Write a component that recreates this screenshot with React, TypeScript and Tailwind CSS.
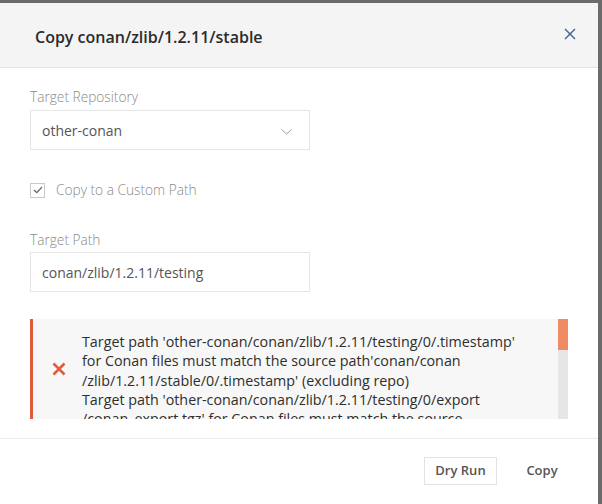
import React from 'react';

const errorLines = [
  "Target path 'other-conan/conan/zlib/1.2.11/testing/0/.timestamp'",
  "for Conan files must match the source path'conan/conan",
  "/zlib/1.2.11/stable/0/.timestamp' (excluding repo)",
  "Target path 'other-conan/conan/zlib/1.2.11/testing/0/export",
  "/conan_export.tgz' for Conan files must match the source",
  "path'conan/conan/zlib/1.2.11/stable/0/export/conan_export.tgz'",
];

export default function App() {
  return (
    <div
      className="h-[504px] w-[602px] overflow-hidden bg-[#6b6b6b] pt-[3px]"
      style={{ fontFamily: '"Open Sans", "Liberation Sans", sans-serif' }}
    >
      <div className="flex h-[501px] w-[598px] flex-col bg-white">
        {/* Header */}
        <div className="flex h-[65px] shrink-0 items-center justify-between border-b border-[#e3e3e3] bg-[#f4f4f4] pl-[35px] pr-[22px]">
          <h1 className="mt-[3px] text-[16px] font-semibold text-[#2b2b2b]">Copy conan/zlib/1.2.11/stable</h1>
          <button className="mb-[3px] text-[#3f5f8f]">
            <svg width="12" height="12" viewBox="0 0 12 12" fill="none" stroke="currentColor" strokeWidth="1.4">
              <path d="M1 1 L11 11 M11 1 L1 11" />
            </svg>
          </button>
        </div>

        {/* Body */}
        <div className="flex flex-col px-[30px] pt-[19px]">
          <label className="h-[20px] text-[13.7px] font-light leading-[20px] text-[#8a8a8a]">Target Repository</label>
          <div className="mt-[3px] flex h-[40px] w-[280px] items-center justify-between border border-[#e6e6e6] pl-[11px] pr-[17px]">
            <span className="text-[14px] text-[#555]">other-conan</span>
            <svg className="mt-[4px]" width="11" height="6" viewBox="0 0 11 6" fill="none" stroke="#9a9a9a" strokeWidth="1">
              <path d="M0.5 0.5 L5.5 5 L10.5 0.5" />
            </svg>
          </div>

          <div className="mt-[32px] flex h-[16px] items-center gap-[11px]">
            <span className="flex h-[15px] w-[15px] items-center justify-center border border-[#c9c9c9] bg-white">
              <svg width="10" height="8" viewBox="0 0 10 8" fill="none" stroke="#6a6a6a" strokeWidth="1.3">
                <path d="M1 4 L3.8 6.6 L9 1" />
              </svg>
            </span>
            <span className="text-[13.7px] font-light text-[#8a8a8a]">Copy to a Custom Path</span>
          </div>

          <label className="mt-[32px] h-[20px] text-[13.7px] font-light leading-[20px] text-[#8a8a8a]">Target Path</label>
          <div className="mt-[2px] flex h-[40px] w-[280px] items-center border border-[#e6e6e6] pl-[11px]">
            <span className="text-[14px] text-[#555]">conan/zlib/1.2.11/testing</span>
          </div>

          {/* Error box */}
          <div className="relative mt-[27px] flex h-[100px] w-[538px] overflow-hidden border-l-[3px] border-[#dd5c3c] bg-[#f7f7f7]">
            <div className="flex w-[49px] shrink-0 items-center pl-[19px]">
              <svg width="14" height="14" viewBox="0 0 14 14" fill="none" stroke="#e05d3c" strokeWidth="2.6">
                <path d="M1.5 1.5 L12.5 12.5 M12.5 1.5 L1.5 12.5" />
              </svg>
            </div>
            <div className="pt-[13px] pr-[20px] text-[14.3px] leading-[19.3px] whitespace-nowrap text-[#2e2e2e]">
              {errorLines.map((line) => (
                <div key={line}>{line}</div>
              ))}
            </div>
            <div className="absolute top-0 right-0 h-full w-[10px] bg-[#e6e6e6]">
              <div className="h-[31px] w-full bg-[#f08c64]" />
            </div>
          </div>
        </div>

        {/* Footer */}
        <div className="mt-[19px] flex justify-end gap-[17px] border-t border-[#ebebeb] pt-[18px] pr-[28px]">
          <button className="flex h-[28px] w-[73px] items-center justify-center border border-[#e3e3e3] text-[13px] font-semibold text-[#555]">
            Dry Run
          </button>
          <button className="flex h-[28px] w-[56px] items-center justify-center text-[13px] font-semibold text-[#555]">
            Copy
          </button>
        </div>
      </div>
    </div>
  );
}
